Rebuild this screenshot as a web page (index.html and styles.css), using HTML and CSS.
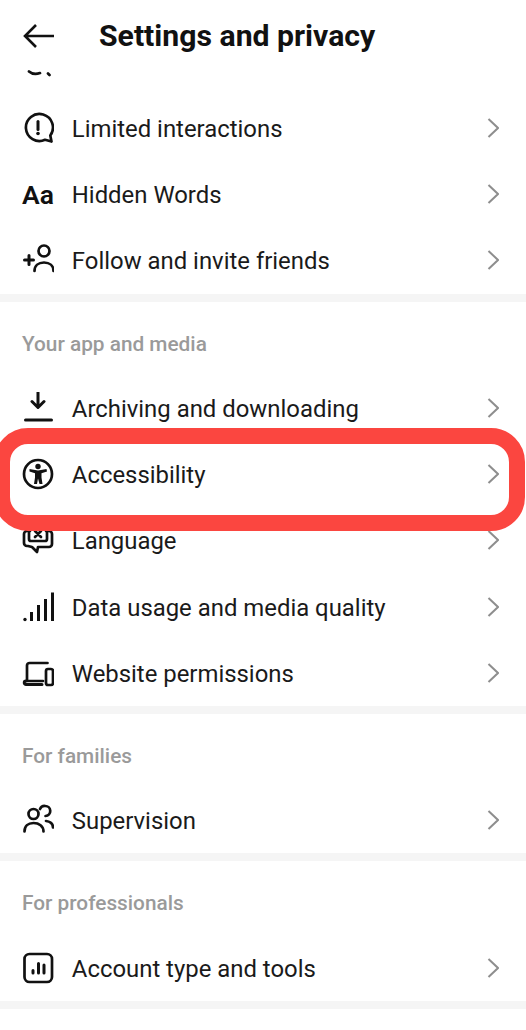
FILE: index.html
```html
<!DOCTYPE html>
<html lang="en">
<head>
<meta charset="utf-8">
<title>Settings and privacy</title>
<link rel="stylesheet" href="styles.css">
</head>
<body>
<div class="screen">
  <header class="header">
    <svg class="back" viewBox="0 0 32 26" aria-hidden="true"><path d="M31 13H2M13 2 2 13l11 11"/></svg>
    <h1 class="title">Settings and privacy</h1>
  </header>
  <div class="fragment">
    <svg class="icon" viewBox="0 0 32 8" height="8" aria-hidden="true"><path d="M7 1.500c3 2.600 7 3 11 1.600M26 3.500l1.500 1.500"/></svg>
  </div>

  <a class="row"><svg class="icon" viewBox="0 0 32 32"><path d="M29.500 29.500l-1.200-6A13.500 13.500 0 1 0 23 27.800z"/><path class="thick" d="M16 9.500v8"/><circle class="dot" cx="16" cy="21.500" r="1.800"/></svg><span class="label">Limited interactions</span><svg class="chev" viewBox="0 0 12 20"><path d="M1.500 1 11 10l-9.500 9"/></svg></a>
  <a class="row"><span class="aa">Aa</span><span class="label">Hidden Words</span><svg class="chev" viewBox="0 0 12 20"><path d="M1.500 1 11 10l-9.500 9"/></svg></a>
  <a class="row"><svg class="icon" viewBox="0 0 32 32"><circle cx="22" cy="7" r="5.500"/><path d="M12.500 27c0-5.500 4-8.500 9.500-8.500s9.500 3 9.500 8.500"/><path class="thick" d="M2.500 16h9M7 11.500v9"/></svg><span class="label">Follow and invite friends</span><svg class="chev" viewBox="0 0 12 20"><path d="M1.500 1 11 10l-9.500 9"/></svg></a>
  <div class="divider"></div>

  <h2 class="section">Your app and media</h2>
  <a class="row"><svg class="icon" viewBox="0 0 32 32"><path class="thick" d="M16 0v14.500M10 9.500l6 6 6-6"/><path class="thick" d="M3.500 28h26"/></svg><span class="label">Archiving and downloading</span><svg class="chev" viewBox="0 0 12 20"><path d="M1.500 1 11 10l-9.500 9"/></svg></a>
  <a class="row"><svg class="icon" viewBox="0 0 32 32"><circle cx="16" cy="16" r="14"/><circle class="dot" cx="16" cy="8.500" r="2.700"/><path class="dot" d="M7.500 11 16 12.500l8.500-1.500.5 2.400-5.500 1.800v4.300l1 6.500h-3L16 20.500 15 26h-3l1-6.500v-4.300l-5.500-1.800z"/></svg><span class="label">Accessibility</span><svg class="chev" viewBox="0 0 12 20"><path d="M1.500 1 11 10l-9.500 9"/></svg></a>
  <a class="row"><svg class="icon" viewBox="0 0 32 32"><path d="M8 7H5a3 3 0 0 0-3 3v9a3 3 0 0 0 3 3h1l4 1 5 5 1-5h11a3 3 0 0 0 3-3V10a3 3 0 0 0-3-3h-3"/><path d="M9 3h14a2 2 0 0 1 2 2v10a2 2 0 0 1-2 2H9a2 2 0 0 1-2-2V5a2 2 0 0 1 2-2z"/><path d="m13 7 6 6M19 7l-6 6"/></svg><span class="label">Language</span><svg class="chev" viewBox="0 0 12 20"><path d="M1.500 1 11 10l-9.500 9"/></svg></a>
  <a class="row"><svg class="icon" viewBox="0 0 32 32"><circle class="dot" cx="3" cy="28.500" r="1.700"/><path class="bars" d="M9.500 30V21M16.500 30V14M23.500 30V8M30.500 30V1.500"/></svg><span class="label">Data usage and media quality</span><svg class="chev" viewBox="0 0 12 20"><path d="M1.500 1 11 10l-9.500 9"/></svg></a>
  <a class="row"><svg class="icon" viewBox="0 0 32 32"><path d="M21 24H5V8.500A2.500 2.500 0 0 1 7.500 6H25.500"/><path class="thick" d="M20 27.500H4a1.700 1.700 0 0 1 0-3.500"/><rect x="24" y="12" width="7" height="16" rx="2"/></svg><span class="label">Website permissions</span><svg class="chev" viewBox="0 0 12 20"><path d="M1.500 1 11 10l-9.500 9"/></svg></a>
  <div class="divider"></div>

  <h2 class="section">For families</h2>
  <a class="row"><svg class="icon" viewBox="0 0 32 32"><circle cx="11.500" cy="10" r="5"/><path d="M2.500 27.500c0-5.500 3.500-8.500 9-8.500s10 3 10 8.500"/><path d="M18 5a5 5 0 0 1 5-3 5 5 0 0 1 .5 10"/><path d="M24 17c4 .5 7 2.500 7 6.500"/></svg><span class="label">Supervision</span><svg class="chev" viewBox="0 0 12 20"><path d="M1.500 1 11 10l-9.500 9"/></svg></a>
  <div class="divider"></div>

  <h2 class="section">For professionals</h2>
  <a class="row"><svg class="icon" viewBox="0 0 32 32"><rect x="2.500" y="2" width="27.500" height="28" rx="5"/><path class="thick" d="M11 18.500v2.500M16.500 11.500V21M22 13v8"/></svg><span class="label">Account type and tools</span><svg class="chev" viewBox="0 0 12 20"><path d="M1.500 1 11 10l-9.500 9"/></svg></a>
  <div class="divider"></div>

  <div class="highlight"></div>
</div>
</body>
</html>
```
FILE: styles.css
```css
* { box-sizing: border-box; }
html, body { margin: 0; padding: 0; background: #fff; }
body { font-family: Roboto, "Liberation Sans", sans-serif; color: #111; }
.screen { position: relative; width: 526px; height: 1030px; overflow: hidden; }

.header { height: 70px; display: flex; align-items: center; padding: 0 0 0 23px; }
.back { width: 32px; height: 26px; fill: none; stroke: #111; stroke-width: 2.600; margin: 2px 44px 0 0; }
.title { margin: 0; font-size: 30.200px; font-weight: 700; color: #111; }

.fragment { height: 25px; padding-left: 22px; }
.fragment .icon { display: block; height: 8px; }

.row { display: flex; align-items: center; height: 66.200px; padding: 0 27px 0 22px; }
.icon { width: 32px; height: 32px; flex: none; fill: none; stroke: #111; stroke-width: 2.700; stroke-linecap: round; stroke-linejoin: round; }
.icon .thick { stroke-width: 3; }
.icon .bars { stroke-width: 3; stroke-linecap: butt; }
.icon .dot { fill: #111; stroke: none; }
.aa { width: 32px; flex: none; font-size: 26.500px; font-weight: 600; text-align: center; color: #111; }
.label { flex: 1; margin-left: 17.800px; padding-top: 2px; font-size: 23.900px; color: #1a1a1a; }
.chev { width: 12px; height: 20px; flex: none; fill: none; stroke: #8e8e8e; stroke-width: 2; }

.divider { height: 8px; background: #f5f5f5; }
.section { margin: 0; height: 73.400px; padding: 27px 0 0 22px; font-size: 20.800px; line-height: 30px; font-weight: 500; color: #9a9a9a; }

.highlight { position: absolute; left: -6px; top: 428px; width: 531px; height: 103px; border: 16px solid #fb4640; border-radius: 34px; }
```
